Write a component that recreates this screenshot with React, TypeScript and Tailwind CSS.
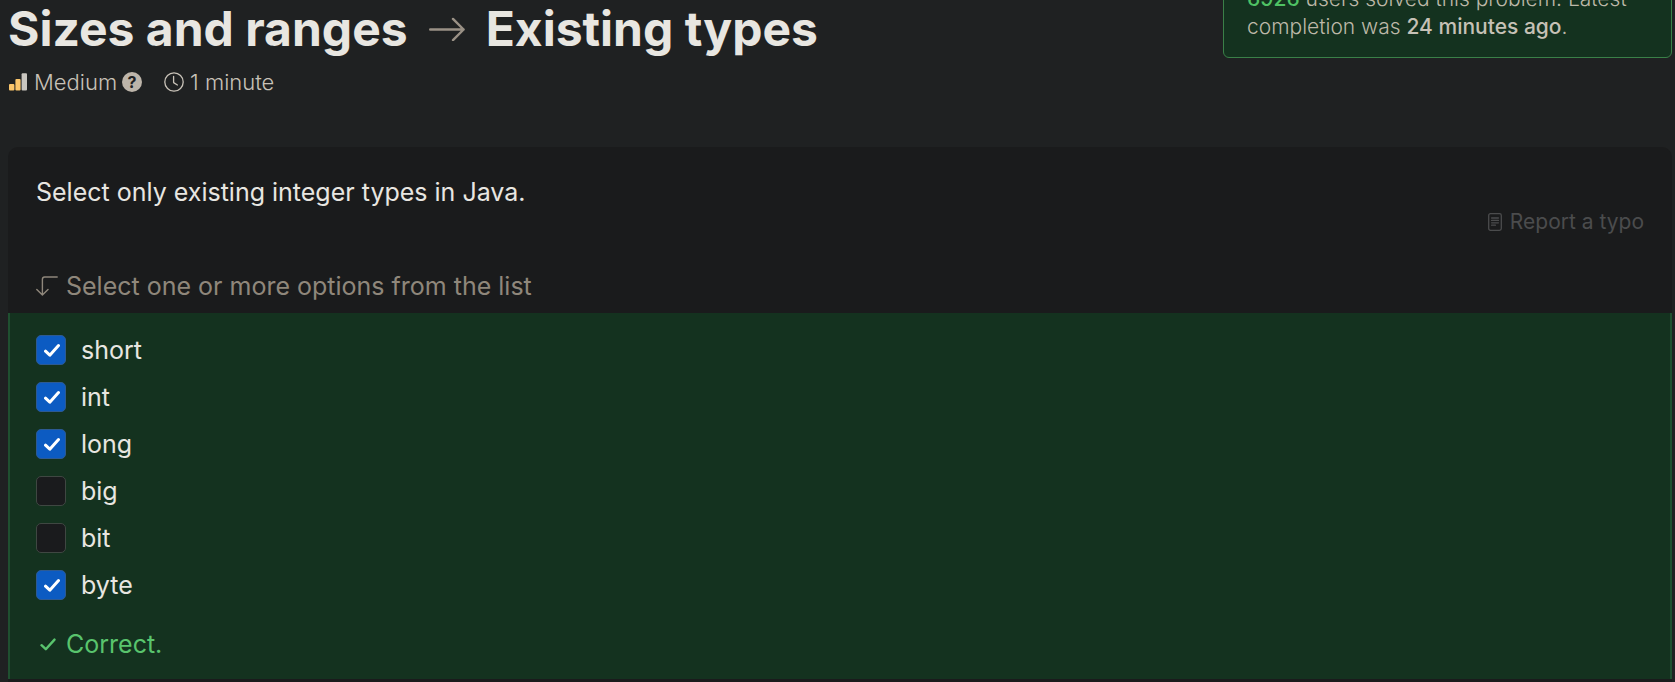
import React, { useState } from "react";

const options = [
  { id: "short", checked: true },
  { id: "int", checked: true },
  { id: "long", checked: true },
  { id: "big", checked: false },
  { id: "bit", checked: false },
  { id: "byte", checked: true },
];

function TitleArrow() {
  return (
    <svg className="h-6 w-9 shrink-0 text-[#9a9186]" viewBox="0 0 36 24" fill="none" stroke="currentColor" strokeWidth="2.4" strokeLinecap="round" strokeLinejoin="round" aria-hidden="true">
      <path d="M1.2 12.5H34.6M24 1.9L34.6 12.5L24 23.1" />
    </svg>
  );
}

function LevelIcon() {
  return (
    <svg className="h-[18px] w-[19px] shrink-0" viewBox="0 0 19 18" aria-hidden="true">
      <rect x="1" y="11" width="5.4" height="6.4" rx="1" fill="#fbc66b" />
      <rect x="7.4" y="6" width="5.2" height="11.4" rx="1" fill="#fbc66b" />
      <rect x="13.6" y="0.3" width="5.4" height="17.1" rx="1" fill="#c9c6c0" />
    </svg>
  );
}

function ClockIcon() {
  return (
    <svg className="h-5 w-5 shrink-0" viewBox="0 0 20 20" fill="none" stroke="currentColor" strokeWidth="1.3" strokeLinecap="round" strokeLinejoin="round" aria-hidden="true">
      <circle cx="10" cy="10" r="9.2" />
      <path d="M9.6 4.4V10.6L13.4 13" />
    </svg>
  );
}

function NoteIcon() {
  return (
    <svg className="h-[18px] w-[14px] shrink-0" viewBox="0 0 14 18" fill="none" stroke="currentColor" strokeWidth="1.3" strokeLinecap="round" aria-hidden="true">
      <rect x="0.7" y="0.7" width="12.6" height="16.6" rx="1.8" />
      <path d="M3.6 5H10.4M3.6 7.4H10.4M3.6 9.8H10.4M3.6 12.2H7.4" />
    </svg>
  );
}

function TurnDownIcon() {
  return (
    <svg className="h-5 w-[22px] shrink-0" viewBox="0 0 22 20" fill="none" stroke="currentColor" strokeWidth="1.4" strokeLinecap="round" strokeLinejoin="round" aria-hidden="true">
      <path d="M21.2 1H8.6Q6.4 1 6.4 3.2V18.8M0.8 13.4L6.4 19L12 13.4" />
    </svg>
  );
}

function Tick({ className }: { className: string }) {
  return (
    <svg className={className} viewBox="0 0 16 13" fill="none" stroke="currentColor" strokeLinecap="round" strokeLinejoin="round" aria-hidden="true">
      <path d="M1.5 7.2L5.8 11.2L14.5 1.6" />
    </svg>
  );
}

function Option({ name, initial }: { name: string; initial: boolean }) {
  const [checked, setChecked] = useState(initial);
  return (
    <li>
      <label className="flex w-fit items-center gap-[15px]">
        <span className="grid h-[30px] w-[30px] place-items-center">
          <input
            type="checkbox"
            name={name}
            checked={checked}
            onChange={(e) => setChecked(e.target.checked)}
            className="col-start-1 row-start-1 h-[30px] w-[30px] appearance-none rounded-[5px] border border-[#3f4742] bg-[#1a1b1d] checked:border-[#2d5a92] checked:bg-[#0c5bc2]"
          />
          {checked && (
            <Tick className="pointer-events-none z-10 col-start-1 row-start-1 ml-0.5 h-[13px] w-4 stroke-3 text-white" />
          )}
        </span>
        <span className="text-[25px] leading-[30px]">{name}</span>
      </label>
    </li>
  );
}

export default function App() {
  return (
    <div className="min-h-screen overflow-hidden bg-[#1f2122] pr-[3px] pl-2 font-['Inter','Liberation_Sans',sans-serif] text-[#e8e6e1]">
      <header className="flex items-start justify-between pb-[51px]">
        <div>
          <h1 className="flex items-center gap-[21px] text-5xl leading-[58px] font-bold">
            <span>Sizes and ranges</span>
            <TitleArrow />
            <span>Existing types</span>
          </h1>
          <div className="mt-[10px] flex items-center text-[22px] leading-7 font-light text-[#c8c2b8]">
            <LevelIcon />
            <span className="ml-[7px]">Medium</span>
            <button type="button" aria-label="About difficulty" className="ml-[5px] flex h-5 w-5 items-center justify-center rounded-full bg-[#bdb5aa] text-base leading-none font-bold text-[#1f2122]">
              ?
            </button>
            <span className="ml-[22px] flex items-center gap-1.5">
              <ClockIcon />
              1 minute
            </span>
          </div>
        </div>
        <aside className="-mt-8 w-[449px] shrink-0 rounded-md border border-[#3a8048] bg-[#14321f] px-[23px] py-4 text-[21px] leading-7 font-light text-[#bdb8a8]">
          <p>
            <span className="font-medium text-[#4fc264]">6926</span> users solved this problem. Latest completion was{" "}
            <span className="font-medium text-[#c6c1b6]">24 minutes ago</span>.
          </p>
        </aside>
      </header>

      <main className="overflow-hidden rounded-t-[10px] bg-[#1a1b1c] pb-1">
        <section className="px-7 pt-[27px] pb-[11px]">
          <p className="text-[25px] leading-9">Select only existing integer types in Java.</p>
          <div className="-mt-0.5 flex justify-end">
            <button type="button" className="flex items-center gap-2 text-[21px] leading-7 text-[#4b4c4d]">
              <NoteIcon />
              Report a typo
            </button>
          </div>
          <p className="mt-[34px] flex items-center gap-2 text-[25px] leading-8 text-[#8f877b]">
            <TurnDownIcon />
            Select one or more options from the list
          </p>
        </section>
        <section className="border-x-2 border-[#1f5030] bg-[#14321f] px-[26px] pt-[22px] pb-[19px]">
          <ul className="flex flex-col gap-[17px]">
            {options.map((o) => (
              <Option key={o.id} name={o.id} initial={o.checked} />
            ))}
          </ul>
          <p className="mt-7 flex items-center gap-2.5 pl-1 text-[25px] leading-8 text-[#59c46d]">
            <Tick className="h-[13px] w-4 stroke-[2.4]" />
            Correct.
          </p>
        </section>
      </main>
    </div>
  );
}
